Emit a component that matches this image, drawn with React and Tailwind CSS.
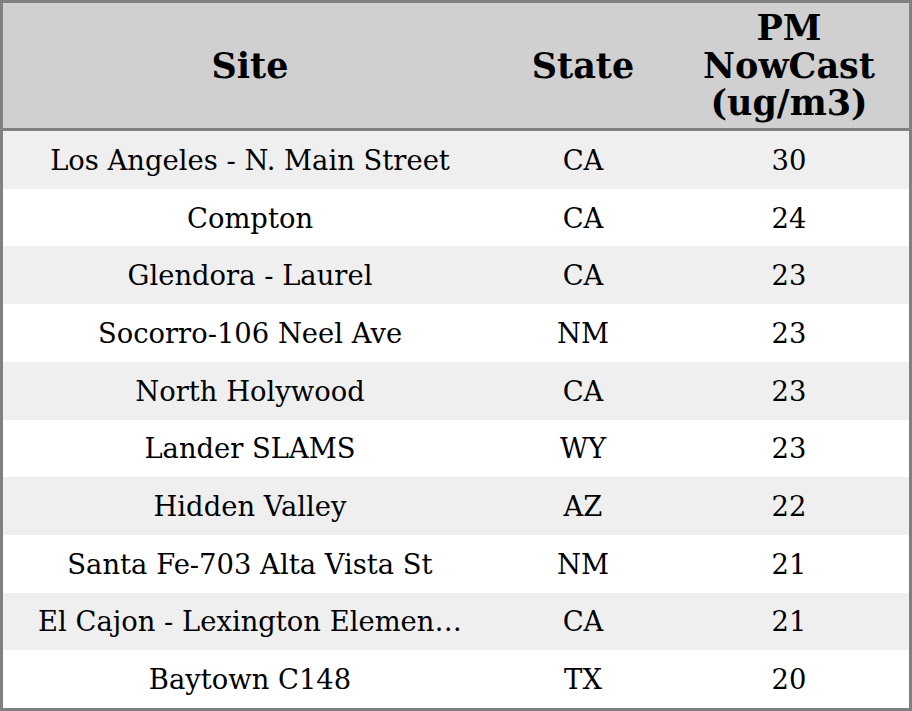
const rows = [
  { site: 'Los Angeles - N. Main Street', state: 'CA', pm: 30 },
  { site: 'Compton', state: 'CA', pm: 24 },
  { site: 'Glendora - Laurel', state: 'CA', pm: 23 },
  { site: 'Socorro-106 Neel Ave', state: 'NM', pm: 23 },
  { site: 'North Holywood', state: 'CA', pm: 23 },
  { site: 'Lander SLAMS', state: 'WY', pm: 23 },
  { site: 'Hidden Valley', state: 'AZ', pm: 22 },
  { site: 'Santa Fe-703 Alta Vista St', state: 'NM', pm: 21 },
  { site: 'El Cajon - Lexington Elementary School', state: 'CA', pm: 21 },
  { site: 'Baytown C148', state: 'TX', pm: 20 },
];

export default function App() {
  return (
    <div
      className="w-[912px] h-[711px] border-[3px] border-[#808080] bg-white text-black flex flex-col"
      style={{ fontFamily: '"DejaVu Serif", serif' }}
    >
      {/* Header */}
      <div className="h-[128px] shrink-0 bg-[#d0d0d0] border-b-[3px] border-[#808080] flex items-center text-[35px] font-bold leading-[37.5px] text-center">
        <div className="w-[494px]">Site</div>
        <div className="w-[172px]">State</div>
        <div className="w-[240px]">
          PM
          <br />
          NowCast
          <br />
          (ug/m3)
        </div>
      </div>

      {/* Rows */}
      <div className="flex-1 flex flex-col text-[27.4px]">
        {rows.map((r, i) => (
          <div
            key={r.site}
            className={`flex-1 flex items-center text-center pt-[1px] ${i % 2 === 0 ? 'bg-[#efefef]' : 'bg-white'}`}
          >
            <div className="w-[494px] flex justify-center">
              <span className="max-w-[424px] truncate">{r.site}</span>
            </div>
            <div className="w-[172px]">{r.state}</div>
            <div className="w-[240px]">{r.pm}</div>
          </div>
        ))}
      </div>
    </div>
  );
}
